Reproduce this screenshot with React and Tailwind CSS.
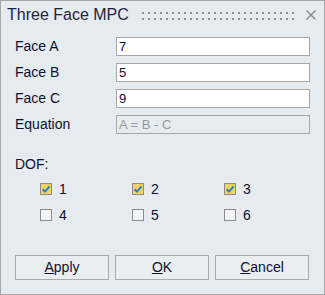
import React, { useState } from 'react';

function Check({ checked }) {
    return (
        <span className={`w-[12px] h-[12px] border border-[#8c8c8c] flex items-center justify-center ${checked ? 'bg-[#f3d35f]' : 'bg-[#f3f5f6]'}`}>
            {checked && (
                <svg width="10" height="10" viewBox="0 0 10 10">
                    <path d="M1.5 5.2 L4 7.6 L8.6 2.4" fill="none" stroke="#2f7fd0" strokeWidth="2" />
                </svg>
            )}
        </span>
    );
}

function Field({ label, value, disabled }) {
    return (
        <div className="flex items-center h-[19px]">
            <span className="w-[101px] text-[14px]">{label}</span>
            <div className={`flex-1 h-[19px] border border-[#a7a7a7] px-[2px] flex items-center ${disabled ? 'bg-[#e5ebee] text-[#9a9a9a]' : 'bg-white text-[#101030]'}`}>
                {value}
            </div>
        </div>
    );
}

export default function App() {
    const [dof] = useState([true, true, true, false, false, false]);

    return (
        <div className="w-[325px] h-[295px] bg-[#e5ebee] border border-[#a8a8a8] text-[13px] text-[#101030] flex flex-col" style={{ fontFamily: '"Liberation Sans", Arial, sans-serif' }}>
            {/* Title bar */}
            <div className="flex items-center h-[28px] pl-[6px] pr-[5px]">
                <span className="text-[16px] text-[#1c2540]">Three Face MPC</span>
                <div className="flex-1 ml-[11px] mr-[10px] h-[12px] bg-[radial-gradient(circle,#8a8f94_1.1px,transparent_1.5px)] bg-[length:6px_6px] mt-[1px]"></div>
                <svg width="12" height="12" viewBox="0 0 12 12" className="mr-[2px]">
                    <path d="M1.5 1.5 L10.5 10.5 M10.5 1.5 L1.5 10.5" stroke="#909090" strokeWidth="1.5" />
                </svg>
            </div>

            {/* Fields */}
            <div className="flex flex-col gap-[7px] pl-[14px] pr-[14px] mt-[8px]">
                <Field label="Face A" value="7" />
                <Field label="Face B" value="5" />
                <Field label="Face C" value="9" />
                <Field label="Equation" value="A = B - C" disabled />
            </div>

            {/* DOF */}
            <div className="pl-[14px] mt-[20px] text-[14px]">DOF:</div>
            <div className="grid grid-cols-3 gap-y-[14px] pl-[39px] mt-[8px] w-[315px]">
                {dof.map((c, i) => (
                    <div key={i} className="flex items-center gap-[7px] h-[12px]">
                        <Check checked={c} />
                        <span className="text-[14px]">{i + 1}</span>
                    </div>
                ))}
            </div>

            {/* Buttons */}
            <div className="flex gap-[6px] pl-[14px] mt-auto mb-[14px]">
                {[['A', 'pply'], ['O', 'K'], ['C', 'ancel']].map(([u, rest]) => (
                    <button key={u} className="w-[94px] h-[25px] border border-[#ababab] bg-[#e9eef0] text-[14px] text-[#101030] flex items-center justify-center">
                        <span className="underline">{u}</span>{rest}
                    </button>
                ))}
            </div>
        </div>
    );
}
